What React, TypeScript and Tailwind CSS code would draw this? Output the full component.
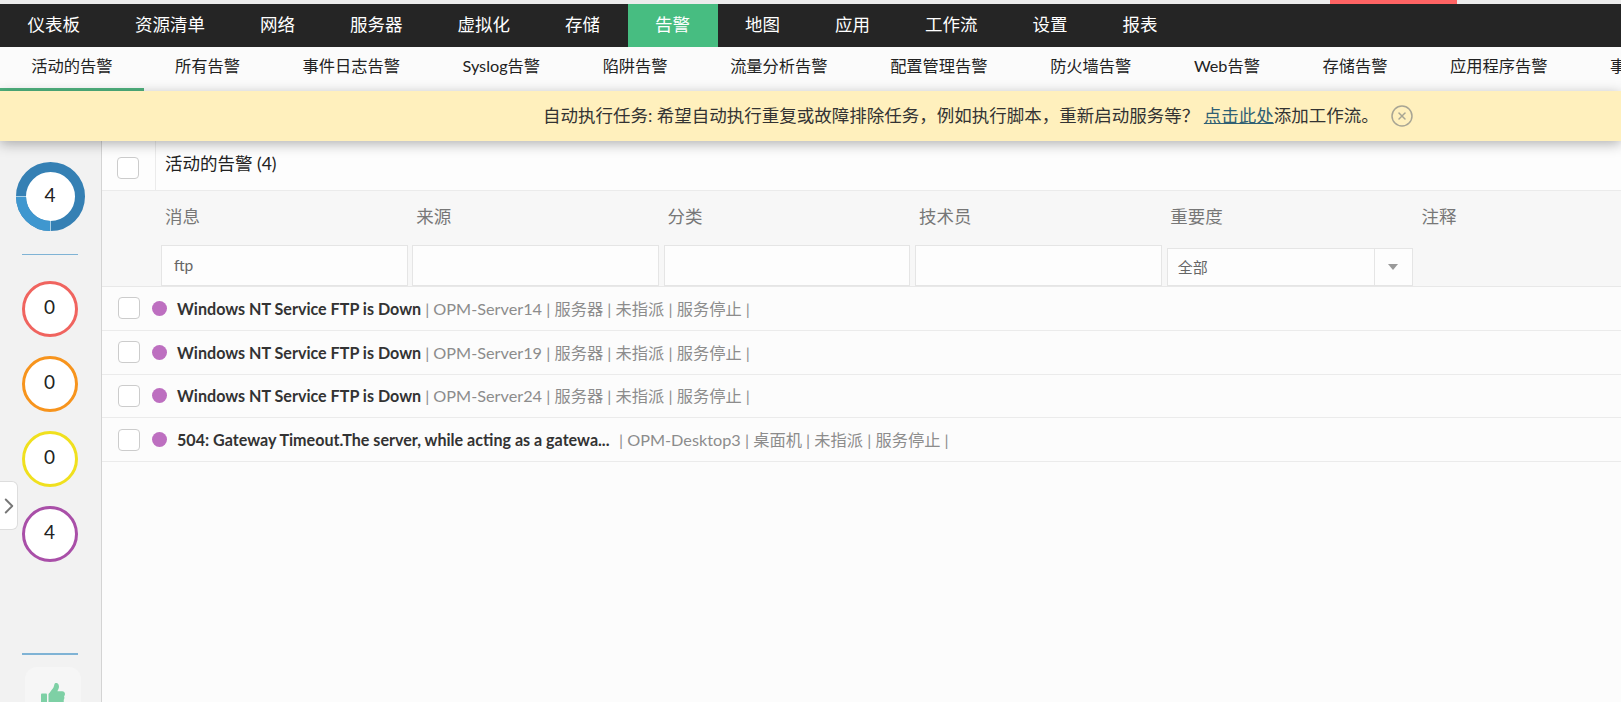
import { CircleX, ChevronRight } from 'lucide-react';
import { FaThumbsUp } from 'react-icons/fa';

const mainNav = ['仪表板', '资源清单', '网络', '服务器', '虚拟化', '存储', '告警', '地图', '应用', '工作流', '设置', '报表'];
const subNav = ['活动的告警', '所有告警', '事件日志告警', 'Syslog告警', '陷阱告警', '流量分析告警', '配置管理告警', '防火墙告警', 'Web告警', '存储告警', '应用程序告警', '事件告警'];
const columns = ['消息', '来源', '分类', '技术员', '重要度', '注释'];

const rows = [
  { title: 'Windows NT Service FTP is Down', meta: '| OPM-Server14 | 服务器 | 未指派 | 服务停止 |' },
  { title: 'Windows NT Service FTP is Down', meta: '| OPM-Server19 | 服务器 | 未指派 | 服务停止 |' },
  { title: 'Windows NT Service FTP is Down', meta: '| OPM-Server24 | 服务器 | 未指派 | 服务停止 |' },
  {
    title: '504: Gateway Timeout.The server, while acting as a gatewa...',
    meta: '| OPM-Desktop3 | 桌面机 | 未指派 | 服务停止 |',
    clipped: true,
  },
];

function CountCircle({ value, color }: { value: number; color: string }) {
  return (
    <div className={`w-14 h-14 rounded-full bg-white border-[3px] ${color} flex items-center justify-center pb-[3px] text-[19px] text-[#222] shrink-0`}>
      {value}
    </div>
  );
}

function Checkbox() {
  return <div className="w-[22px] h-[22px] rounded-[4px] border border-[#cccccc] bg-white shrink-0" />;
}

export default function App() {
  return (
    <div className="relative h-[702px] w-full overflow-hidden flex flex-col bg-[#fcfcfc] font-[Lato,'Noto_Sans_CJK_SC',sans-serif]">
      {/* Top strip */}
      <div className="h-1 bg-[#ececec] shrink-0">
        <div className="h-1 w-[127px] ml-[1330px] bg-[#ff6464]" />
      </div>

      {/* Main nav */}
      <div className="h-[43px] bg-[#252525] flex shrink-0 pl-0">
        {mainNav.map((item) => (
          <div
            key={item}
            className={`px-[27.5px] flex items-center text-[17.5px] text-white ${item === '告警' ? 'bg-[#47bd81]' : ''}`}
          >
            {item}
          </div>
        ))}
      </div>

      {/* Sub nav */}
      <div className="h-11 bg-[#fbfbfb] flex shrink-0 whitespace-nowrap overflow-hidden">
        {subNav.map((item, i) => (
          <div
            key={item}
            className={`px-[31.25px] pb-[3px] flex items-center text-[16.25px] text-[#222] shrink-0 border-b-[3px] ${i === 0 ? 'border-[#4fb27e] px-[31.5px]' : 'border-transparent'}`}
          >
            {item}
          </div>
        ))}
      </div>

      {/* Banner */}
      <div className="relative z-10 h-[50px] bg-[#fff0bd] shadow-[0_3px_12px_rgba(0,0,0,0.3)] flex items-center pl-[543px] shrink-0 text-[17.5px] text-[#333]">
        <span className="whitespace-nowrap">
          自动执行任务: 希望自动执行重复或故障排除任务，例如执行脚本，重新启动服务等？ <a className="text-[#2f5f73] underline">点击此处</a>添加工作流。
        </span>
        <CircleX className="w-6 h-6 ml-[11px] text-[#a8a594]" strokeWidth={1.5} />
      </div>

      <div className="flex flex-1 min-h-0">
        {/* Left summary rail */}
        <div className="relative w-[102px] shrink-0 bg-[#f2f2f2] border-r border-[#d4d4d4] flex flex-col items-center pt-[21px] pr-[2px]">
          <div className="relative w-[69px] h-[69px] ml-[1px] shrink-0">
            <svg viewBox="0 0 69 69" className="w-[69px] h-[69px]">
              <circle cx="34.5" cy="34.5" r="29.5" fill="#ffffff" stroke="#3580b4" strokeWidth="10" />
              <path d="M34.5 64 A29.5 29.5 0 0 1 5 34.5" fill="none" stroke="#3f97cf" strokeWidth="10" />
              <path d="M34.5 59v10M0 34.5h10" stroke="#a9cfe6" strokeWidth="1" />
            </svg>
            <span className="absolute inset-0 flex items-center justify-center pb-[3px] text-[19px] text-[#222]">4</span>
          </div>
          <div className="w-14 h-px bg-[#7fb3d5] mt-[23px] mb-[26px] shrink-0" />
          <div className="flex flex-col gap-[19px]">
            <CountCircle value={0} color="border-[#f0645f]" />
            <CountCircle value={0} color="border-[#f7941d]" />
            <CountCircle value={0} color="border-[#f0e01e]" />
            <CountCircle value={4} color="border-[#a94fa8]" />
          </div>
          <div className="w-14 h-0.5 bg-[#7fb3d5] mt-[91px] mb-[12px] shrink-0" />
          <div className="w-14 h-14 ml-[6px] rounded-xl bg-[#f6f6f6] flex justify-center pt-4 shrink-0">
            <FaThumbsUp className="w-6 h-6 text-[#7ed0a5]" />
          </div>

          {/* Collapse handle */}
          <div className="absolute left-0 top-[340px] w-[18px] h-[49px] bg-white border border-l-0 border-[#dddddd] rounded-r-md flex items-center justify-center">
            <ChevronRight className="w-[26px] h-[26px] shrink-0 text-[#777777]" strokeWidth={1.75} />
          </div>
        </div>

        {/* Alarm list */}
        <div className="flex-1 min-w-0 flex flex-col">
          <div className="h-[50px] flex border-b border-[#ebebeb] bg-[#fdfdfd] shrink-0">
            <div className="w-[54px] border-r border-[#ebebeb] pl-[15px] pt-4">
              <Checkbox />
            </div>
            <div className="pl-[9px] pt-[10px] text-[17.5px] leading-[26px] text-[#222]">活动的告警 (4)</div>
          </div>

          <div className="h-[96px] bg-[#f7f7f7] border-b border-[#e8e8e8] pl-[59px] flex flex-col shrink-0">
            <div className="h-[52px] mb-[2px] flex items-center shrink-0">
              {columns.map((c) => (
                <div key={c} className="w-[251.3px] pl-1 text-[17.5px] text-[#777777] shrink-0">{c}</div>
              ))}
            </div>
            <div className="flex items-end h-[41px] shrink-0">
              {columns.slice(0, 4).map((c, i) => (
                <div key={c} className="w-[251.3px] pr-[4.5px] shrink-0">
                  <div className="h-[41px] border border-[#e5e5e5] bg-[#fdfdfd] flex items-center pl-3 text-[15.5px] text-[#666666]">
                    {i === 0 ? 'ftp' : ''}
                  </div>
                </div>
              ))}
              <div className="w-[246px] ml-[0.5px] h-[38px] border border-[#e5e5e5] bg-[#fdfdfd] flex items-center text-[15px] text-[#666666] shrink-0">
                <div className="flex-1 pl-[10px]">全部</div>
                <div className="w-[38px] h-full border-l border-[#e5e5e5] flex items-center justify-center">
                  <div className="w-0 h-0 border-x-[5px] border-x-transparent border-t-[6px] border-t-[#999999]" />
                </div>
              </div>
            </div>
          </div>

          {rows.map((row, i) => (
            <div key={i} className="h-[43.8px] border-b border-[#ebebeb] flex items-center pl-[16px] shrink-0 text-[16.25px] whitespace-nowrap">
              <Checkbox />
              <span className="w-[15px] h-[15px] rounded-full bg-[#bd6fc0] ml-[12px] mr-[10px] shrink-0" />
              <span className={`font-bold text-[16.1px] text-[#333333] pt-[1px] ${row.clipped ? 'w-[435px]' : ''}`}>{row.title}</span>
              <span className={`${row.clipped ? 'ml-[7px]' : 'ml-[4px]'} pt-[1px] text-[#8c8c8c]`}>{row.meta}</span>
            </div>
          ))}
        </div>
      </div>
    </div>
  );
}
